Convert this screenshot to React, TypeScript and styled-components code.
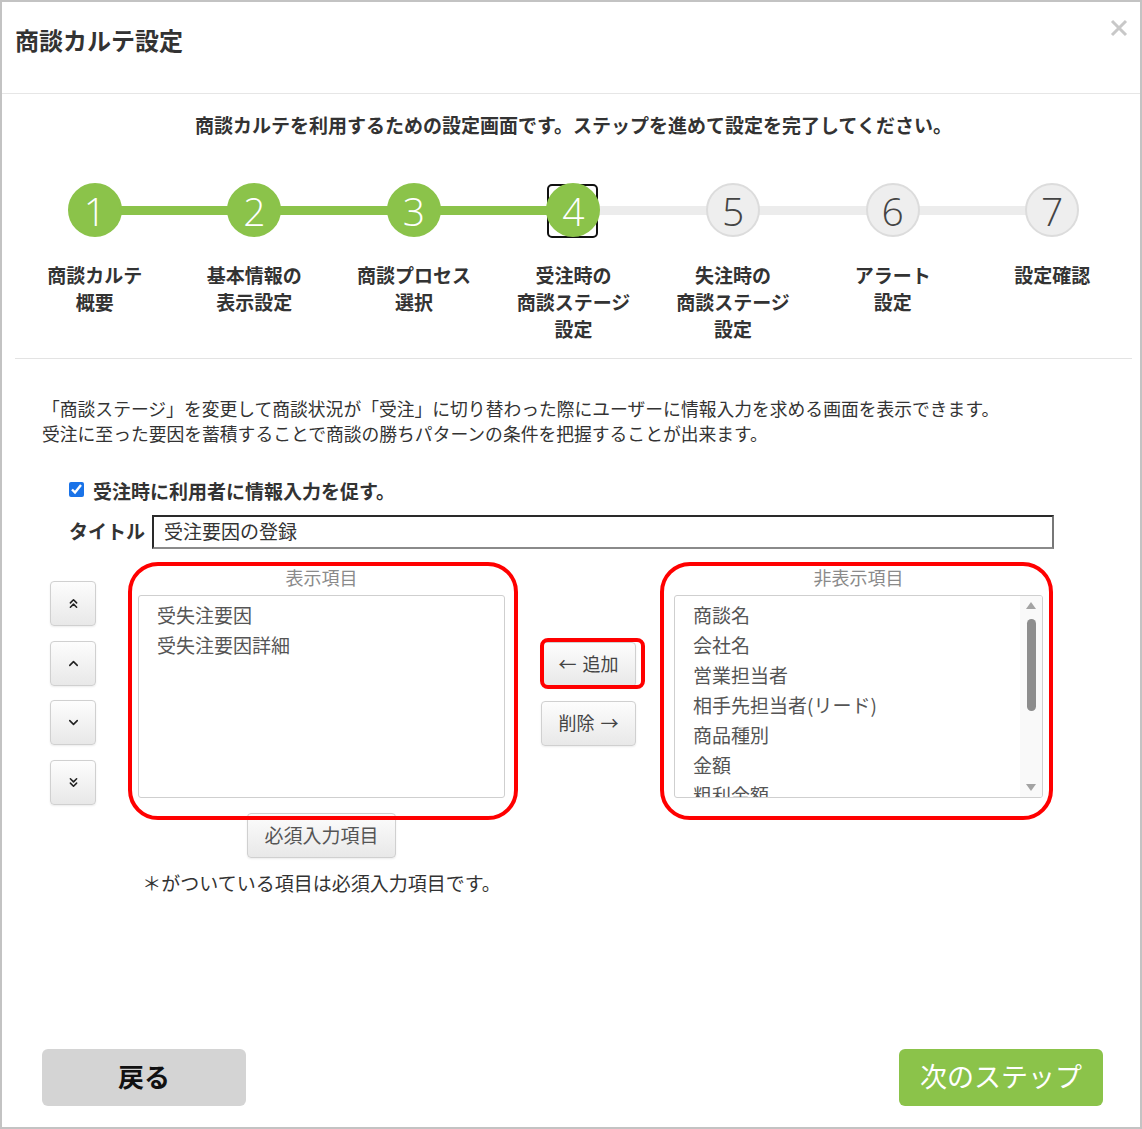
import React from "react";
import styled, { createGlobalStyle } from "styled-components";
import { ChevronsUp, ChevronUp, ChevronDown, ChevronsDown } from "lucide-react";

const GlobalStyle = createGlobalStyle`
  html, body {
    margin: 0;
    padding: 0;
    background: #fff;
  }
  body {
    font-family: "Noto Sans CJK JP", "Noto Sans", sans-serif;
    color: #333;
  }
`;

const steps: string[][] = [
  ["商談カルテ", "概要"],
  ["基本情報の", "表示設定"],
  ["商談プロセス", "選択"],
  ["受注時の", "商談ステージ", "設定"],
  ["失注時の", "商談ステージ", "設定"],
  ["アラート", "設定"],
  ["設定確認"],
];
const currentStep = 4;

const shownItems = ["受失注要因", "受失注要因詳細"];
const hiddenItems = [
  "商談名",
  "会社名",
  "営業担当者",
  "相手先担当者(リード)",
  "商品種別",
  "金額",
  "粗利金額",
];

const GREEN = "#8bc34a";

const Dialog = styled.div`
  box-sizing: border-box;
  width: 1142px;
  height: 1129px;
  border: 2px solid #c3c3c3;
  background: #fff;
  display: flex;
  flex-direction: column;
`;

const Header = styled.header`
  box-sizing: border-box;
  height: 92px;
  border-bottom: 1px solid #e6e6e6;
  padding: 23px 12px 0 13px;
  display: flex;
  justify-content: space-between;
  align-items: flex-start;
`;

const Title = styled.h1`
  margin: 0;
  font-size: 24px;
  line-height: 30px;
  font-weight: 700;
  color: #333;
`;

const CloseButton = styled.button`
  margin-top: -6px;
  padding: 0;
  border: none;
  background: none;
  width: 18px;
  height: 18px;
  display: flex;
`;

const Body = styled.main`
  padding: 0 8px 0 13px;
  display: flex;
  flex-direction: column;
`;

const Intro = styled.p`
  margin: 19px 0 0;
  text-align: center;
  font-size: 19px;
  line-height: 24px;
  font-weight: 700;
  color: #333;
`;

const Stepper = styled.ol`
  list-style: none;
  margin: 46px 0 0;
  padding: 0;
  display: grid;
  grid-template-columns: repeat(7, 1fr);
`;

const Step = styled.li<{ $done: boolean; $first: boolean }>`
  position: relative;
  display: flex;
  flex-direction: column;
  align-items: center;

  &::before {
    content: "";
    display: ${(p) => (p.$first ? "none" : "block")};
    position: absolute;
    top: 23px;
    right: 50%;
    width: 100%;
    height: 9px;
    background: ${(p) => (p.$done ? GREEN : "#ececec")};
  }
`;

const FocusRing = styled.span`
  position: absolute;
  z-index: 1;
  top: 1px;
  left: 50%;
  margin-left: -26px;
  box-sizing: border-box;
  width: 51px;
  height: 54px;
  border: 2px solid #111;
  border-radius: 5px;
`;

const Circle = styled.span<{ $done: boolean }>`
  position: relative;
  z-index: 2;
  box-sizing: border-box;
  width: 54px;
  height: 54px;
  border-radius: 50%;
  background: ${(p) => (p.$done ? GREEN : "#eeeeee")};
  border: 2px solid ${(p) => (p.$done ? GREEN : "#dcdcdc")};
  color: ${(p) => (p.$done ? "#fff" : "#444")};
  font-family: "Open Sans", "Noto Sans", sans-serif;
  font-weight: 300;
  font-size: 39px;
  line-height: 1;
  display: flex;
  align-items: center;
  justify-content: center;
`;

const StepLabel = styled.span`
  margin-top: 24px;
  font-size: 19px;
  line-height: 27px;
  font-weight: 700;
  text-align: center;
  color: #333;
`;

const Divider = styled.hr`
  margin: 16px 0 0;
  border: none;
  border-top: 1px solid #e3e3e3;
`;

const Description = styled.p`
  margin: 37px 0 0;
  padding-left: 27px;
  font-size: 17.8px;
  line-height: 25px;
  color: #333;
`;

const CheckRow = styled.label`
  margin-top: 31px;
  padding-left: 54px;
  display: flex;
  align-items: center;
  height: 26px;
  font-size: 19px;
  font-weight: 700;
  color: #333;

  input {
    width: 15px;
    height: 15px;
    margin: 0 9px 2px 0;
    accent-color: #1a73e8;
  }
`;

const TitleRow = styled.div`
  margin-top: 12px;
  padding-left: 54px;
  display: flex;
  align-items: center;
`;

const FieldLabel = styled.span`
  font-size: 19px;
  font-weight: 700;
  margin: 0 7px 3px 0;
  color: #333;
`;

const TextInput = styled.input`
  box-sizing: border-box;
  width: 902px;
  height: 34px;
  padding: 0 10px 3px;
  border: 2px solid;
  border-color: #2a2a2a #777 #8a8a8a #2a2a2a;
  font-family: inherit;
  font-size: 19px;
  color: #333;
  outline: none;
`;

const ListsSection = styled.section`
  margin-top: 18px;
  padding-left: 35px;
  display: flex;
  align-items: flex-start;
`;

const ButtonBase = styled.button`
  box-sizing: border-box;
  border: 1px solid #d0d0d0;
  border-radius: 4px;
  background: linear-gradient(#fdfdfd, #e8e8e8);
  box-shadow: 0 1px 2px rgba(0, 0, 0, 0.08);
  font-family: inherit;
  color: #444;
  padding: 0;
  display: flex;
  align-items: center;
  justify-content: center;
`;

const MoveColumn = styled.div`
  margin-top: 14px;
  display: flex;
  flex-direction: column;
  gap: 14.5px;
`;

const MoveButton = styled(ButtonBase)`
  width: 46px;
  height: 45px;
  color: #222;
`;

const ListGroup = styled.div<{ $gap: number; $width: number }>`
  margin-left: ${(p) => p.$gap}px;
  width: ${(p) => p.$width}px;
  display: flex;
  flex-direction: column;
  align-items: center;
`;

const Framed = styled.div<{ $l: number; $r: number }>`
  position: relative;
  width: 100%;

  &::after {
    content: "";
    position: absolute;
    top: -5px;
    bottom: -22px;
    left: ${(p) => -p.$l}px;
    right: ${(p) => -p.$r}px;
    border: 4px solid #ff0000;
    border-radius: 30px;
    pointer-events: none;
  }
`;

const ListHeading = styled.div`
  height: 28px;
  line-height: 20px;
  font-size: 18px;
  color: #8a8a8a;
  text-align: center;
`;

const ListBox = styled.div`
  box-sizing: border-box;
  height: 203px;
  border: 1px solid #cfcfcf;
  border-radius: 3px;
  overflow: hidden;
  display: flex;
`;

const Items = styled.ul`
  flex: 1;
  list-style: none;
  margin: 0;
  padding: 4px 0 0 18px;
`;

const Item = styled.li`
  font-size: 19px;
  line-height: 30px;
  color: #555;
  white-space: nowrap;
`;

const ScrollBar = styled.div`
  width: 22px;
  box-sizing: border-box;
  padding: 6px 0 6px;
  background: #f9f9f9;
  display: flex;
  flex-direction: column;
  align-items: center;
`;

const Arrow = styled.span<{ $up: boolean }>`
  width: 0;
  height: 0;
  border-left: 5px solid transparent;
  border-right: 5px solid transparent;
  ${(p) => (p.$up ? "border-bottom" : "border-top")}: 7px solid #a3a3a3;
`;

const Thumb = styled.span`
  margin-top: 10px;
  width: 9px;
  height: 92px;
  border-radius: 5px;
  background: #8d8d8d;
`;

const Spacer = styled.span`
  flex: 1;
`;

const RequiredButton = styled(ButtonBase)`
  margin-top: 15px;
  width: 149px;
  height: 45px;
  padding-bottom: 3px;
  font-size: 19px;
  color: #555;
`;

const Note = styled.p`
  margin: 13px 0 0;
  font-size: 19px;
  line-height: 24px;
  color: #333;
  white-space: nowrap;
`;

const TransferColumn = styled.div`
  margin-left: 36px;
  margin-top: 75px;
  display: flex;
  flex-direction: column;
  gap: 14px;
`;

const TransferButton = styled(ButtonBase)<{ $marked?: boolean }>`
  position: relative;
  width: 95px;
  height: 45px;
  padding-bottom: 3px;
  font-size: 18px;
  color: #444;
  gap: 6px;

  &::after {
    content: "";
    display: ${(p) => (p.$marked ? "block" : "none")};
    position: absolute;
    top: -5px;
    bottom: -3px;
    left: -2px;
    right: -10px;
    border: 4px solid #ff0000;
    border-radius: 8px;
  }
`;

const Footer = styled.footer`
  margin-top: auto;
  padding: 0 37px 21px 40px;
  display: flex;
  justify-content: space-between;
`;

const FooterButton = styled.button<{ $primary?: boolean }>`
  width: 204px;
  height: 57px;
  padding: 0 0 5px;
  border: none;
  border-radius: 6px;
  font-family: inherit;
  background: ${(p) => (p.$primary ? GREEN : "#d4d4d4")};
  color: ${(p) => (p.$primary ? "#fff" : "#111")};
  font-size: ${(p) => (p.$primary ? "27px" : "26px")};
  font-weight: ${(p) => (p.$primary ? 400 : 700)};
`;

const App: React.FC = () => {
  return (
    <>
      <GlobalStyle />
      <Dialog>
        <Header>
          <Title>商談カルテ設定</Title>
          <CloseButton aria-label="閉じる">
            <svg width="18" height="18" viewBox="0 0 18 18">
              <path d="M2 2 L16 16 M16 2 L2 16" stroke="#c8c8c8" strokeWidth="3" />
            </svg>
          </CloseButton>
        </Header>

        <Body>
          <Intro>商談カルテを利用するための設定画面です。ステップを進めて設定を完了してください。</Intro>

          <Stepper>
            {steps.map((lines, i) => {
              const n = i + 1;
              const done = n <= currentStep;
              return (
                <Step key={n} $done={done} $first={i === 0}>
                  {n === currentStep && <FocusRing />}
                  <Circle $done={done}>{n}</Circle>
                  <StepLabel>
                    {lines.map((l, j) => (
                      <React.Fragment key={j}>
                        {j > 0 && <br />}
                        {l}
                      </React.Fragment>
                    ))}
                  </StepLabel>
                </Step>
              );
            })}
          </Stepper>

          <Divider />

          <Description>
            「商談ステージ」を変更して商談状況が「受注」に切り替わった際にユーザーに情報入力を求める画面を表示できます。
            <br />
            受注に至った要因を蓄積することで商談の勝ちパターンの条件を把握することが出来ます。
          </Description>

          <CheckRow>
            <input type="checkbox" defaultChecked />
            受注時に利用者に情報入力を促す。
          </CheckRow>

          <TitleRow>
            <FieldLabel>タイトル</FieldLabel>
            <TextInput defaultValue="受注要因の登録" />
          </TitleRow>

          <ListsSection>
            <MoveColumn>
              <MoveButton aria-label="先頭へ">
                <ChevronsUp size={15} strokeWidth={2.5} />
              </MoveButton>
              <MoveButton aria-label="上へ">
                <ChevronUp size={15} strokeWidth={2.5} />
              </MoveButton>
              <MoveButton aria-label="下へ">
                <ChevronDown size={15} strokeWidth={2.5} />
              </MoveButton>
              <MoveButton aria-label="末尾へ">
                <ChevronsDown size={15} strokeWidth={2.5} />
              </MoveButton>
            </MoveColumn>

            <ListGroup $gap={42} $width={367}>
              <Framed $l={10} $r={13}>
                <ListHeading>表示項目</ListHeading>
                <ListBox>
                  <Items>
                    {shownItems.map((t) => (
                      <Item key={t}>{t}</Item>
                    ))}
                  </Items>
                </ListBox>
              </Framed>
              <RequiredButton>必須入力項目</RequiredButton>
              <Note>＊がついている項目は必須入力項目です。</Note>
            </ListGroup>

            <TransferColumn>
              <TransferButton $marked>
                <span>←</span>
                <span>追加</span>
              </TransferButton>
              <TransferButton>
                <span>削除</span>
                <span>→</span>
              </TransferButton>
            </TransferColumn>

            <ListGroup $gap={38} $width={369}>
              <Framed $l={14} $r={10}>
                <ListHeading>非表示項目</ListHeading>
                <ListBox>
                  <Items>
                    {hiddenItems.map((t) => (
                      <Item key={t}>{t}</Item>
                    ))}
                  </Items>
                  <ScrollBar>
                    <Arrow $up />
                    <Thumb />
                    <Spacer />
                    <Arrow $up={false} />
                  </ScrollBar>
                </ListBox>
              </Framed>
            </ListGroup>
          </ListsSection>
        </Body>

        <Footer>
          <FooterButton>戻る</FooterButton>
          <FooterButton $primary>次のステップ</FooterButton>
        </Footer>
      </Dialog>
    </>
  );
};

export default App;
